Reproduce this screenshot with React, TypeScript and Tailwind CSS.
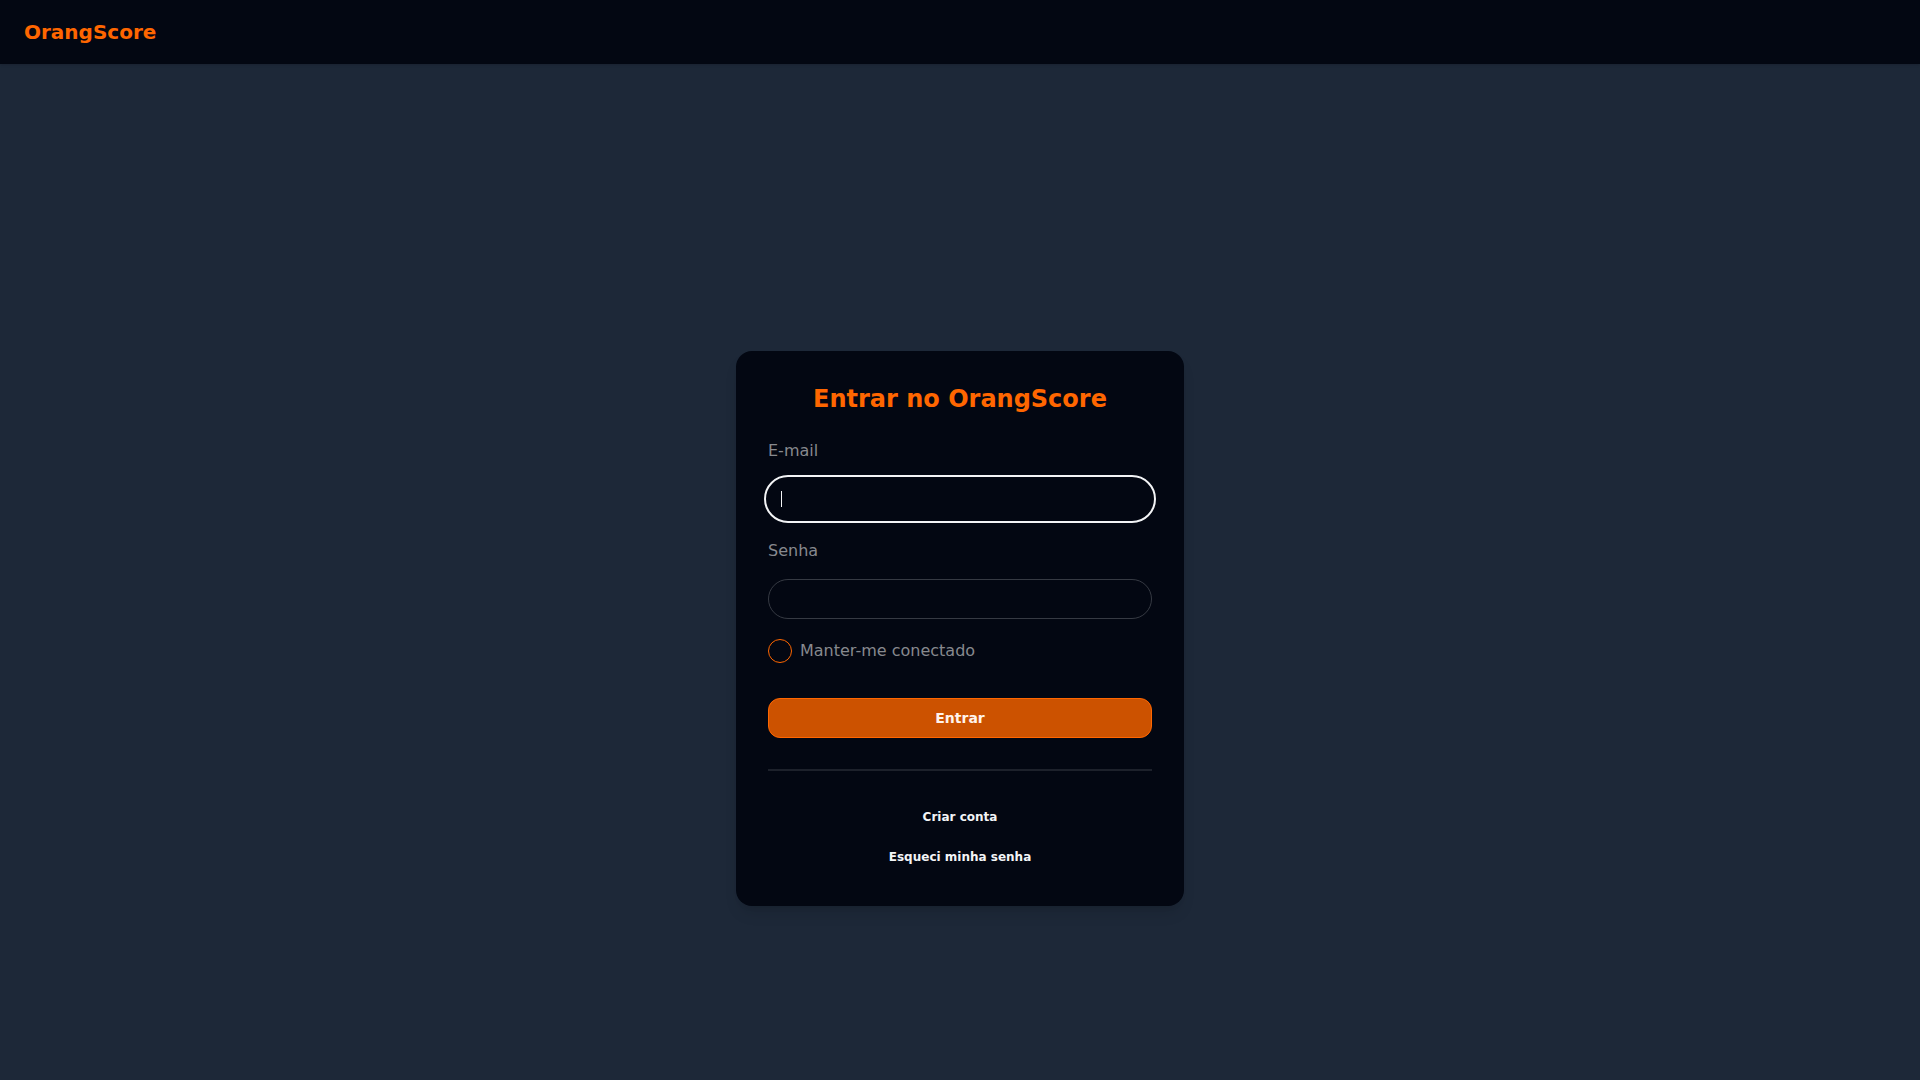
import { useState } from "react"

export default function App() {
  const [email, setEmail] = useState("")
  const [senha, setSenha] = useState("")
  const [manter, setManter] = useState(false)

  return (
    <div className="min-h-screen flex flex-col bg-[#1d2838] font-['DejaVu_Sans',sans-serif]">
      {/* Navbar */}
      <header className="h-16 px-6 flex items-center bg-[#030712] shadow-sm">
        <a href="#" className="text-[#ff6600] text-xl font-bold">
          OrangScore
        </a>
      </header>

      {/* Login */}
      <main className="flex-1 px-4 pt-[113px] flex items-center justify-center">
        <div className="w-full max-w-md px-8 pt-8 pb-[33px] rounded-2xl bg-[#030712] shadow-lg">
          <h1 className="text-[#ff6600] text-2xl font-bold text-center">
            Entrar no OrangScore
          </h1>

          <form className="mt-6 flex flex-col gap-4" onSubmit={(e) => e.preventDefault()}>
            <div className="flex flex-col gap-4">
              <label htmlFor="email" className="text-base text-[#87898e]">
                E-mail
              </label>
              <div className="relative">
                <input
                  id="email"
                  type="email"
                  autoFocus
                  value={email}
                  onChange={(e) => setEmail(e.target.value)}
                  className="peer block w-full h-10 px-3 rounded-full border border-[#363a43] text-sm text-gray-100 caret-transparent focus:border-transparent focus:outline-2 focus:outline-offset-2 focus:outline-gray-100 not-placeholder-shown:caret-gray-100"
                  placeholder=" "
                />
                {/* Cursor do campo vazio */}
                <span className="hidden peer-focus:peer-placeholder-shown:block absolute left-[13px] top-3 w-px h-4 bg-gray-100 pointer-events-none" />
              </div>
            </div>

            <div className="mt-1 flex flex-col gap-4">
              <label htmlFor="senha" className="text-base text-[#87898e]">
                Senha
              </label>
              <input
                id="senha"
                type="password"
                value={senha}
                onChange={(e) => setSenha(e.target.value)}
                className="w-full h-10 px-3 rounded-full border border-[#363a43] text-sm text-gray-100 focus:border-transparent focus:outline-2 focus:outline-offset-2 focus:outline-gray-100"
              />
            </div>

            <label className="mt-1 flex items-center gap-2 text-base text-[#87898e]">
              <input
                type="checkbox"
                checked={manter}
                onChange={(e) => setManter(e.target.checked)}
                className="size-6 appearance-none rounded-full border border-[#ff6600] checked:bg-[#ff6600]"
              />
              Manter-me conectado
            </label>

            <button
              type="submit"
              className="mt-[19px] w-full h-10 rounded-xl border border-[#ff6600] bg-[#cc5200] text-sm font-bold text-[#fff3eb]"
            >
              Entrar
            </button>
          </form>

          <hr className="mt-[31px] mb-[30px] border-t-2 border-[#1d212b]" />

          <nav className="flex flex-col gap-2 text-xs font-bold text-gray-100">
            <a href="#" className="h-8 flex items-center justify-center">
              Criar conta
            </a>
            <a href="#" className="h-8 flex items-center justify-center">
              Esqueci minha senha
            </a>
          </nav>
        </div>
      </main>
    </div>
  )
}
